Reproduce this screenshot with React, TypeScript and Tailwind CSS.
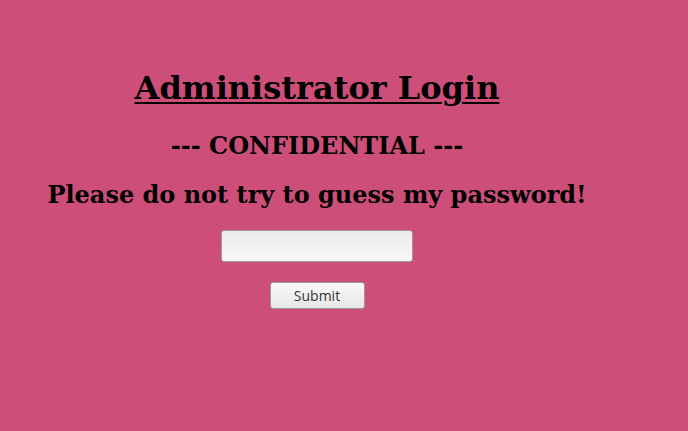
export default function App() {
  return (
    <div className="min-h-screen w-full bg-[#cd4f79] font-['DejaVu_Serif',serif] text-black">
      <div className="w-[634px] flex flex-col items-center pt-[70px]">
        <h1 className="text-[32px] leading-[37px] font-bold underline decoration-2 underline-offset-[3px]">
          Administrator Login
        </h1>
        <h2 className="mt-[25px] text-[24px] leading-[28px] font-bold">--- CONFIDENTIAL ---</h2>
        <p className="mt-[21px] text-[24px] leading-[28px] font-bold">
          Please do not try to guess my password!
        </p>
        <input
          type="password"
          className="mt-[21px] w-[192px] h-[32px] rounded-[3px] border border-[#9a9a9a] bg-gradient-to-b from-[#ebebeb] to-[#f7f7f7] outline-none"
        />
        <button className="mt-[20px] w-[95px] h-[27px] rounded-[3px] border border-[#9a9a9a] bg-gradient-to-b from-[#fafafa] to-[#e6e6e6] font-['Open_Sans',sans-serif] text-[14px] leading-[25px] text-[#333]">
          Submit
        </button>
      </div>
    </div>
  )
}
